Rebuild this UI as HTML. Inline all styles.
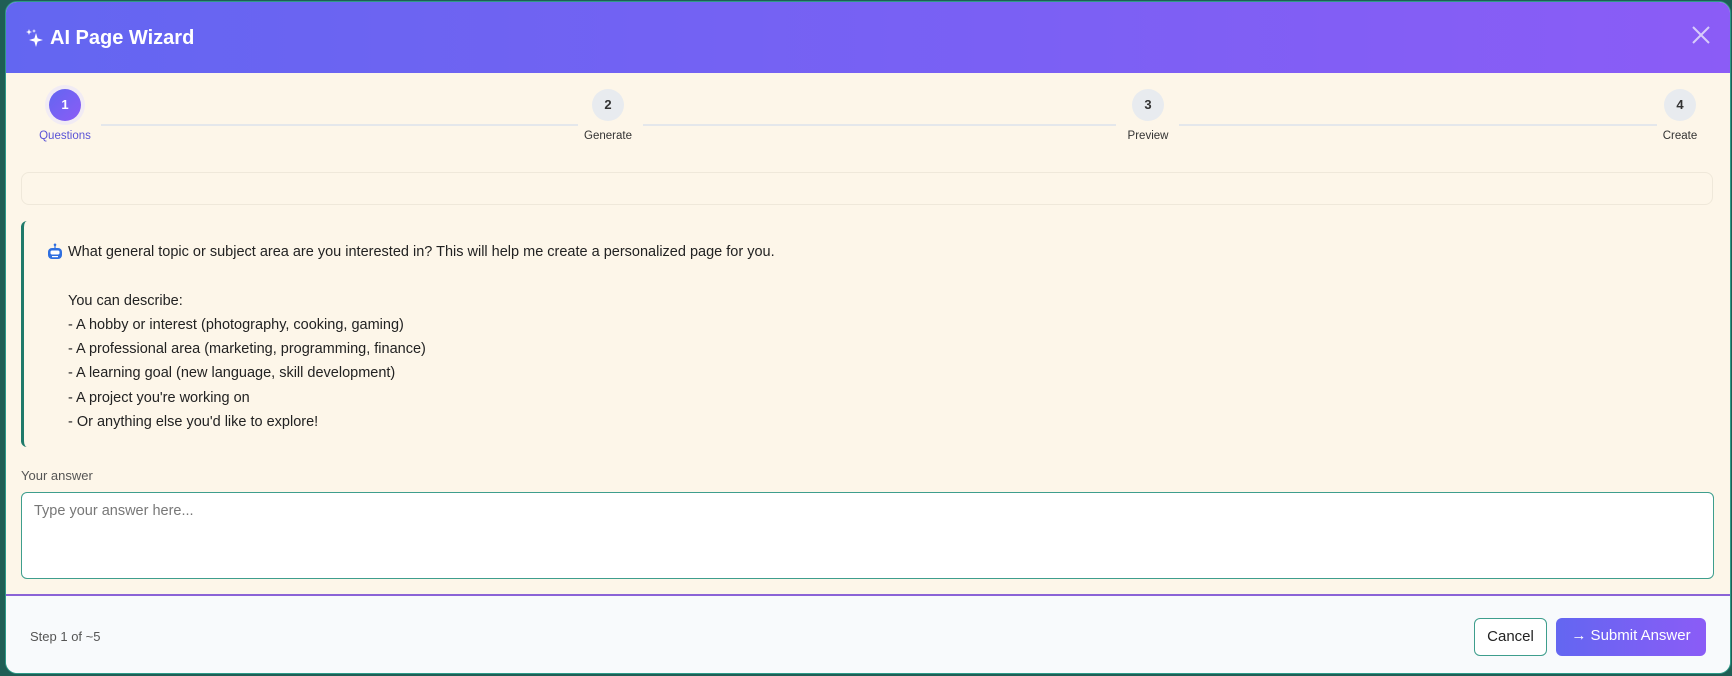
<!DOCTYPE html>
<html><head><meta charset="utf-8"><style>
*{box-sizing:border-box;margin:0;padding:0}
body{width:1732px;height:676px;background:#1f5e55;font-family:"Liberation Sans",sans-serif;position:relative;overflow:hidden}
.modal{position:absolute;left:5px;top:1px;width:1726px;height:673px;background:#fdf6e9;border-radius:12px;overflow:hidden;border:1px solid #2e9a88}
.hdr{position:absolute;left:0;top:0;right:0;height:71px;background:linear-gradient(90deg,#6366f1,#8b5cf6)}
.title{position:absolute;left:44px;top:25px;color:#fff;font-size:20px;font-weight:bold}
.close{position:absolute;right:18px;top:22px}
.step{position:absolute;top:87px;width:80px;margin-left:-40px;text-align:center}
.c{width:32px;height:32px;border-radius:50%;background:#e8ebef;margin:0 auto;font-size:13px;font-weight:bold;line-height:32px;color:#333}
.lbl{font-size:11.5px;color:#333;margin-top:9px}
.line{position:absolute;top:122px;height:2px;background:#e4e7eb}
.box{position:absolute;left:15px;width:1692px;border:1px solid #efe8da;border-radius:8px}
.msg{position:absolute;left:15px;top:219px;width:1692px;height:226px;border-left:3px solid #1f7a6a;border-radius:6px}
.txt{position:absolute;left:62px;top:238px;font-size:14.5px;line-height:24.3px;color:#222}
.ta{position:absolute;left:15px;top:490px;width:1693px;height:87px;background:#fff;border:1px solid #3e9e8d;border-radius:6px;padding:10px 12px;font-size:14.5px;color:#777}
.foot{position:absolute;left:0;right:0;top:592px;bottom:0;background:#f8fafc;border-top:2px solid #8b63d6}
.btn{position:absolute;top:22px;height:38px;border-radius:6px;font-size:15px;line-height:36px;text-align:center}
</style></head><body>
<div class="modal">
<div class="hdr">
<svg style="position:absolute;left:19px;top:26px" width="20" height="20" viewBox="0 0 20 20" fill="#fff"><path d="M11 5 L12.6 10.4 L18 12 L12.6 13.6 L11 19 L9.4 13.6 L4 12 L9.4 10.4Z"/><path d="M4 1 L4.8 3.2 L7 4 L4.8 4.8 L4 7 L3.2 4.8 L1 4 L3.2 3.2Z"/><path d="M9 1 L9.5 2.5 L11 3 L9.5 3.5 L9 5 L8.5 3.5 L7 3 L8.5 2.5Z"/></svg>
<div class="title">AI Page Wizard</div>
<svg class="close" width="22" height="22" viewBox="0 0 22 22" stroke="#d8ccfb" stroke-width="2"><path d="M3 3L19 19M19 3L3 19"/></svg>
</div>
<div class="line" style="left:95px;width:477px"></div>
<div class="line" style="left:637px;width:473px"></div>
<div class="line" style="left:1173px;width:478px"></div>
<div class="step" style="left:59px"><div class="c" style="background:linear-gradient(135deg,#6366f1,#8b5cf6);color:#fff;box-shadow:0 0 0 4px #f1ebf4">1</div><div class="lbl" style="color:#5b54d6">Questions</div></div>
<div class="step" style="left:602px"><div class="c">2</div><div class="lbl">Generate</div></div>
<div class="step" style="left:1142px"><div class="c">3</div><div class="lbl">Preview</div></div>
<div class="step" style="left:1674px"><div class="c">4</div><div class="lbl">Create</div></div>
<div class="box" style="top:170px;height:33px"></div>
<div class="msg"></div>
<svg style="position:absolute;left:40px;top:241px" width="18" height="18" viewBox="0 0 18 18"><circle cx="9" cy="1.8" r="1.3" fill="#2f6fe0"/><rect x="8.4" y="2" width="1.2" height="3" fill="#2f6fe0"/><rect x="2" y="5" width="14" height="11" rx="4" fill="#2f6fe0"/><rect x="4.5" y="7.5" width="9" height="4" rx="1.5" fill="#fff"/><rect x="6" y="13" width="6" height="1.2" fill="#fff"/></svg>
<div class="txt">What general topic or subject area are you interested in? This will help me create a personalized page for you.<br><br>You can describe:<br>- A hobby or interest (photography, cooking, gaming)<br>- A professional area (marketing, programming, finance)<br>- A learning goal (new language, skill development)<br>- A project you're working on<br>- Or anything else you'd like to explore!</div>
<div style="position:absolute;left:15px;top:466px;font-size:13px;color:#555">Your answer</div>
<div class="ta">Type your answer here...</div>
<div class="foot">
<div style="position:absolute;left:24px;top:33px;font-size:13px;color:#555">Step 1 of ~5</div>
<div class="btn" style="left:1468px;width:73px;border:1px solid #3e9e8d;background:#fff;color:#222">Cancel</div>
<div class="btn" style="left:1550px;width:150px;background:linear-gradient(90deg,#6366f1,#8b5cf6);color:#fff">→ Submit Answer</div>
</div>
</div>
</body></html>
